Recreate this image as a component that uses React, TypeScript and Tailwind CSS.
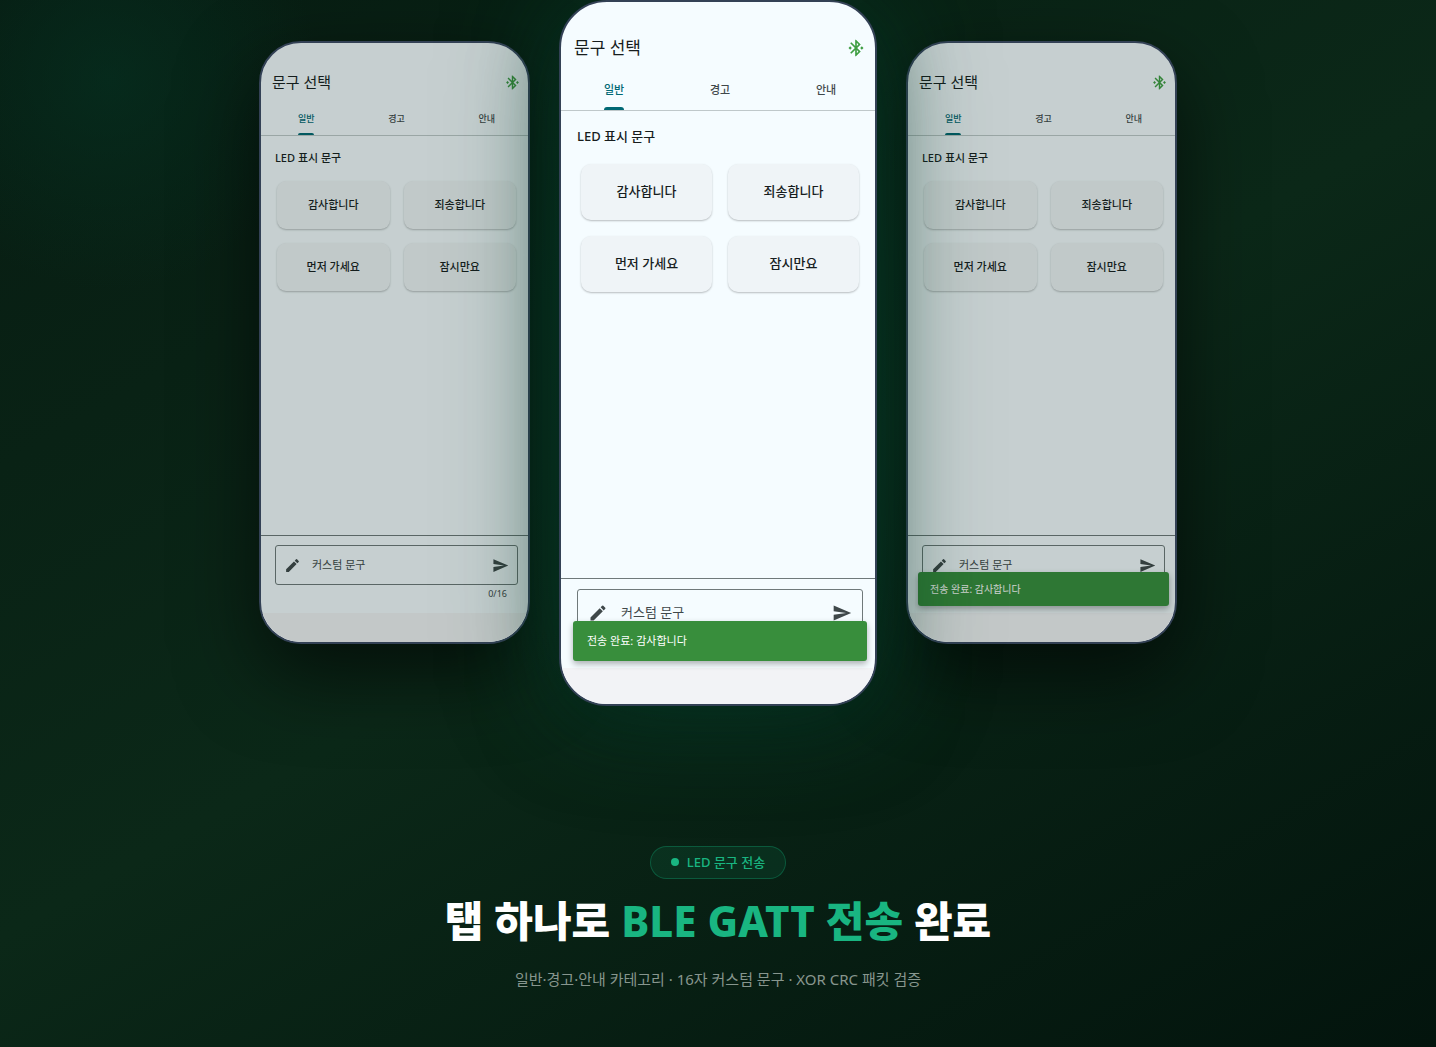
import clsx from 'clsx'
import { MdBluetoothConnected, MdEdit, MdSend } from 'react-icons/md'

const TABS = ['일반', '경고', '안내']
const PHRASES = ['감사합니다', '죄송합니다', '먼저 가세요', '잠시만요']

interface PhoneProps {
  id: string
  main?: boolean
  toast?: string
}

function Phone({ id, main = false, toast }: PhoneProps) {
  return (
    <section
      className={clsx(
        'relative flex shrink-0 flex-col overflow-hidden border-2 border-[#334155] bg-[#f5fcff] text-[#171d1e]',
        main
          ? 'z-10 aspect-[318/706] w-[318px] rounded-[48px] shadow-[0_0_120px_rgba(8,90,62,0.4),0_20px_80px_rgba(2,30,20,0.6)]'
          : 'mt-[41px] aspect-[271/603] w-[271px] rounded-[42px] shadow-[0_30px_80px_rgba(0,0,0,0.6)]',
      )}
    >
      {/* Screen runs slightly past the right bezel */}
      <div className="-mr-1 flex flex-1 flex-col">
        <header className={clsx('flex items-center justify-between', main ? 'px-[13px] pt-9' : 'px-[11px] pt-[27px]')}>
          <h2 className={main ? 'text-[17px] leading-5' : 'text-[15px] leading-6'}>문구 선택</h2>
          <MdBluetoothConnected className={clsx('text-[#3f9e43]', main ? 'size-5' : 'size-[17px]')} />
        </header>

        <nav
          className={clsx(
            'grid grid-cols-3 justify-items-center border-b border-[#bfc8ca]',
            main ? 'mt-3 h-[41px] text-[11px]' : 'mt-2 h-[34px] text-[9px]',
          )}
        >
          {TABS.map((tab, i) => (
            <button
              key={tab}
              type="button"
              className={clsx(
                'flex flex-col items-center justify-between font-medium',
                i === 0 ? 'text-[#006874]' : 'text-[#3f484a]',
              )}
            >
              <span className={main ? 'pt-3 leading-4' : 'pt-[9px] leading-4'}>{tab}</span>
              {i === 0 && <span className={clsx('w-full rounded-t-full bg-[#006874]', main ? 'h-[3px]' : 'h-[2px]')} />}
            </button>
          ))}
        </nav>

        <div className={clsx('flex-1', main ? 'px-4 pt-[15px]' : 'px-[14px] pt-3')}>
          <h3 className={clsx('font-medium', main ? 'text-[13px] leading-5' : 'text-[11px] leading-5')}>
            LED 표시 문구
          </h3>
          <div className={clsx('grid grid-cols-2', main ? 'mt-[18px] gap-4 px-1' : 'mt-[13px] gap-[14px] px-[2px]')}>
            {PHRASES.map((phrase) => (
              <button
                key={phrase}
                type="button"
                className={clsx(
                  'bg-[#eff4f7] font-medium shadow-[0_1px_2px_rgba(0,0,0,0.25)]',
                  main ? 'h-14 rounded-[10px] text-[13px]' : 'h-12 rounded-[9px] text-[11px]',
                )}
              >
                {phrase}
              </button>
            ))}
          </div>
        </div>

        <form className={clsx('border-t border-[#6f797a]', main ? 'px-4 pt-[10px]' : 'px-[14px] pt-[9px]')}>
          <div
            className={clsx(
              'flex items-center rounded-[3px] border border-[#6f797a] text-[#3f484a]',
              main ? 'h-[47px] gap-[13px] px-[10px] text-[13px]' : 'h-10 gap-[11px] px-2 text-[11px]',
            )}
          >
            <MdEdit className={clsx('shrink-0', main ? 'size-5' : 'size-[17px]')} />
            <label htmlFor={id}>커스텀 문구</label>
            <input id={id} type="text" maxLength={16} className="min-w-0 flex-1 bg-transparent outline-none" />
            <button type="button" aria-label="전송" className="shrink-0">
              <MdSend className={main ? 'size-5' : 'size-[17px]'} />
            </button>
          </div>
          <p
            className={clsx(
              'text-right text-[#3f484a]',
              main ? 'h-5 px-3 text-[10px] leading-5' : 'h-4 px-[11px] text-[9px] leading-[18px]',
            )}
          >
            {!toast && '0/16'}
          </p>
        </form>
        <div className={clsx('mt-3 bg-[#f2f3f6]', main ? 'h-9' : 'h-[29px]')} />
      </div>

      {/* Snackbar */}
      {toast && (
        <div
          role="status"
          className={clsx(
            'absolute rounded-[3px] bg-[#388e3c] text-white shadow-[0_3px_6px_rgba(0,0,0,0.3)]',
            main
              ? 'right-2 bottom-[43px] left-3 px-[14px] text-[11px] leading-10'
              : 'right-[6px] bottom-9 left-[10px] px-3 text-[10px] leading-[34px]',
          )}
        >
          {toast}
        </div>
      )}

      {/* Dim the side phones */}
      {!main && <div className="pointer-events-none absolute inset-0 bg-[#0a2015]/20" />}
    </section>
  )
}

export default function App() {
  return (
    <main
      lang="ko"
      className="flex min-h-screen flex-col items-center overflow-hidden bg-[radial-gradient(circle_at_110px_80px,rgba(5,50,34,0.6),transparent_210px),radial-gradient(circle_at_50%_36%,rgba(4,60,42,0.35),transparent_36%),linear-gradient(150deg,#071c12_0%,#0b2818_50%,#03140d_100%)] font-['Noto_Sans','Noto_Sans_CJK_KR',sans-serif]"
    >
      <div className="flex items-start justify-center gap-[29px]">
        <Phone id="phrase-left" />
        <Phone id="phrase-main" main toast="전송 완료: 감사합니다" />
        <Phone id="phrase-right" toast="전송 완료: 감사합니다" />
      </div>

      <div className="flex flex-col items-center pt-[140px] pb-14 text-center">
        <p className="flex items-center gap-2 rounded-full border border-[#10b981]/30 bg-[#10b981]/10 px-5 pt-[3px] pb-1 text-[13px] leading-6 font-medium text-[#19b581]">
          <span className="size-2 rounded-full bg-[#19b581]" />
          LED 문구 전송
        </p>
        <h1 className="mt-3 text-[42px] leading-[60px] font-extrabold text-white">
          탭 하나로 <span className="text-[#19b581]">BLE GATT 전송</span> 완료
        </h1>
        <p className="mt-4 text-[15px] leading-6 text-[#87968e]">
          일반·경고·안내 카테고리 · 16자 커스텀 문구 · XOR CRC 패킷 검증
        </p>
      </div>
    </main>
  )
}
